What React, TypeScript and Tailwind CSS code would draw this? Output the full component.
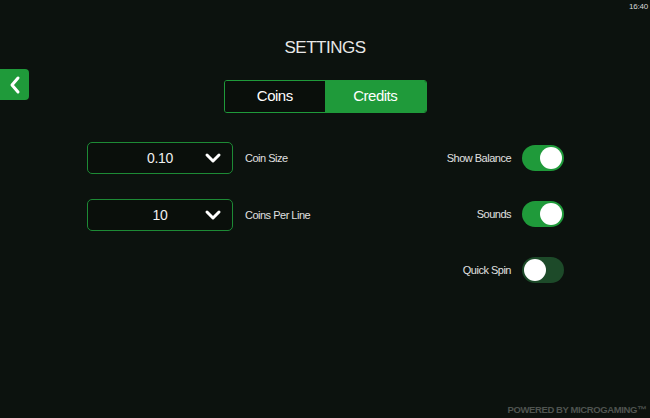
import { useState } from "react";

function Chevron() {
  return (
    <svg width="18" height="12" viewBox="0 0 18 12" fill="none">
      <path d="M3 3 L9 9 L15 3" stroke="white" strokeWidth="3" strokeLinecap="round" strokeLinejoin="round" />
    </svg>
  );
}

function Toggle({ on, onClick }: { on: boolean; onClick: () => void }) {
  return (
    <button
      onClick={onClick}
      className={`flex h-[26px] w-[42px] items-center rounded-full px-[2px] ${on ? "justify-end bg-[#1f9a3a]" : "justify-start bg-[#1d4a29]"}`}
    >
      <span className="h-[22px] w-[22px] rounded-full bg-white" />
    </button>
  );
}

export default function App() {
  const [mode, setMode] = useState<"coins" | "credits">("credits");
  const [toggles, setToggles] = useState({ balance: true, sounds: true, quick: false });

  const dropdowns = [
    { value: "0.10", label: "Coin Size" },
    { value: "10", label: "Coins Per Line" },
  ];
  const switches: { key: keyof typeof toggles; label: string }[] = [
    { key: "balance", label: "Show Balance" },
    { key: "sounds", label: "Sounds" },
    { key: "quick", label: "Quick Spin" },
  ];

  return (
    <div className="relative flex h-[418px] w-[650px] flex-col overflow-hidden bg-[#0c120e] text-white" style={{ fontFamily: '"Liberation Sans", Arial, sans-serif' }}>
      <span className="absolute right-[2px] top-[1px] text-[8px] tracking-tight text-[#d8d8d8]">16:40</span>

      <button className="absolute left-0 top-[69px] flex h-[31px] w-[29px] items-center justify-center rounded-r-[4px] bg-[#1f9a3a]">
        <svg width="14" height="20" viewBox="0 0 14 20" fill="none">
          <path d="M10 3 L4 10 L10 17" stroke="white" strokeWidth="3" strokeLinecap="round" strokeLinejoin="round" />
        </svg>
      </button>

      <h1 className="mt-[38px] text-center text-[17px] leading-[20px] tracking-[-0.5px] text-[#e8e8e8]">SETTINGS</h1>

      <div className="mt-[22px] flex justify-center">
        <div className="flex h-[33px] w-[203px] overflow-hidden rounded-[3px] border border-[#1f9a3a]">
          <button onClick={() => setMode("coins")}
            className={`flex-1 text-[15px] tracking-[-0.5px] ${mode === "coins" ? "bg-[#1f9a3a]" : "bg-[#0a0f0b]"} text-white`}>
            Coins
          </button>
          <button onClick={() => setMode("credits")}
            className={`flex-1 text-[15px] tracking-[-0.5px] ${mode === "credits" ? "bg-[#1f9a3a]" : "bg-[#0a0f0b]"} text-white`}>
            Credits
          </button>
        </div>
      </div>

      <div className="mt-[29px] flex justify-between pl-[87px] pr-[86px]">
        <div className="flex flex-col gap-[25px]">
          {dropdowns.map(d => (
            <div key={d.label} className="flex h-[32px] items-center gap-[12px]">
              <div className="flex h-[32px] w-[146px] items-center rounded-[5px] border border-[#1d8a35] bg-[#0a0f0b] pl-[28px] pr-[10px]">
                <span className="flex-1 text-center text-[14px] tracking-[-0.3px] text-[#f0f0f0]">{d.value}</span>
                <Chevron />
              </div>
              <span className="text-[11px] tracking-[-0.5px] text-[#e0e0e0]">{d.label}</span>
            </div>
          ))}
        </div>

        <div className="flex flex-col items-end gap-[24px]">
          {switches.map(s => (
            <div key={s.key} className="flex h-[32px] items-center gap-[11px]">
              <span className="text-[11px] tracking-[-0.5px] text-[#e0e0e0]">{s.label}</span>
              <Toggle on={toggles[s.key]} onClick={() => setToggles(t => ({ ...t, [s.key]: !t[s.key] }))} />
            </div>
          ))}
        </div>
      </div>

      <div className="mt-auto flex justify-end pb-[1px] pr-[4px]">
        <span className="text-[9.5px] font-bold tracking-[-0.4px] text-[#4f5450]">POWERED BY MICROGAMING™</span>
      </div>
    </div>
  );
}
